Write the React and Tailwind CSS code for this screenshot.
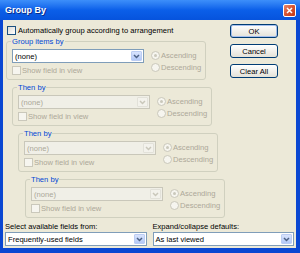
import React from "react";

const Chevron = ({ color }) => (
  <svg width="7" height="5" viewBox="0 0 7 5">
    <path d="M1 1l2.5 2.5L6 1" fill="none" stroke={color} strokeWidth="1.5" />
  </svg>
);

const Combo = ({ text, disabled, className = "" }) => (
  <div
    className={`flex h-[14px] border ${
      disabled ? "border-[#c9c7ba] bg-[#f0efe7] text-[#aca899]" : "border-[#7f9db9] bg-white text-black"
    } ${className}`}
  >
    <span className="flex-1 pl-[2px] flex items-center whitespace-nowrap">{text}</span>
    <span
      className={`w-[11px] m-[1px] flex items-center justify-center rounded-[1px] border ${
        disabled
          ? "bg-[#f3f2ec] border-[#e2e1d9]"
          : "bg-linear-to-b from-[#d9e4fd] to-[#b4c9f7] border-[#bccdf3]"
      }`}
    >
      <Chevron color={disabled ? "#c9c7ba" : "#4d6185"} />
    </span>
  </div>
);

const Check = ({ disabled }) => (
  <span
    className={`w-[9px] h-[9px] shrink-0 border ${
      disabled ? "border-[#cac8bb] bg-[#f6f5ef]" : "border-[#1c5180] bg-linear-to-br from-[#dcdbd5] to-white"
    }`}
  />
);

const Radio = ({ checked, label }) => (
  <div className="flex items-center gap-[1px] h-[9px] text-[#aca899]">
    <span className="w-[9px] h-[9px] rounded-full border border-[#cac8bb] bg-[#f6f5ef] flex items-center justify-center">
      {checked && <span className="w-[3px] h-[3px] rounded-full bg-[#cac8bb]" />}
    </span>
    <span>{label}</span>
  </div>
);

const GroupBox = ({ title, enabled, className = "" }) => (
  <fieldset className={`w-[200px] min-w-0 border border-[#d0d0bf] rounded-[3px] pt-[3px] pb-[4px] ${className}`}>
    <legend className="ml-[4px] px-[1px] text-[#0046d5]">{title}</legend>
    <div className="flex pl-[5px]">
      <div className="flex flex-col">
        <Combo text="(none)" disabled={!enabled} className="w-[132px]" />
        <div className="mt-[3px] flex items-center gap-[1px] h-[9px] text-[#aca899]">
          <Check disabled />
          <span>Show field in view</span>
        </div>
      </div>
      <div className="ml-[7px] pt-[2px] flex flex-col gap-[3px]">
        <Radio checked label="Ascending" />
        <Radio label="Descending" />
      </div>
    </div>
  </fieldset>
);

const Button = ({ label, isDefault }) => (
  <div
    className={`w-[48px] h-[14px] rounded-[3px] border border-[#003c74] bg-linear-to-b from-white to-[#e4e2d8] flex items-center justify-center ${
      isDefault ? "shadow-[inset_0_0_0_1px_#a6c0ef]" : ""
    }`}
  >
    {label}
  </div>
);

const App = () => {
  return (
    <div className="w-[300px] h-[253px] bg-[#0a47d2] flex flex-col overflow-hidden font-['Liberation_Sans',Arial,sans-serif] text-[7.6px] leading-[9px] text-black">
      <div className="h-[20px] shrink-0 flex items-center pl-[5px] pr-[4px] bg-linear-to-b from-[#3d8ffa] via-[#0b5fe9] to-[#0653dd]">
        <span className="flex-1 text-white font-bold text-[9px] [text-shadow:1px_1px_0_#0a2c8a]">Group By</span>
        <span className="w-[13px] h-[13px] rounded-[2px] border border-white bg-linear-to-br from-[#e8876a] via-[#d65330] to-[#c23a17] flex items-center justify-center">
          <svg width="7" height="7" viewBox="0 0 7 7">
            <path d="M1 1l5 5M6 1L1 6" stroke="white" strokeWidth="1.5" />
          </svg>
        </span>
      </div>

      <div className="flex-1 ml-[3px] mr-[4px] mb-[5px] bg-[#ece9d8] flex flex-col">
        <div className="flex">
          <div className="w-[222px] pl-[3px] pt-[6px] flex flex-col">
            <div className="ml-[1px] flex items-center gap-[2px] h-[9px] whitespace-nowrap">
              <Check />
              <span>Automatically group according to arrangement</span>
            </div>
            <GroupBox title="Group items by" enabled className="mt-[2px]" />
            <GroupBox title="Then by" className="mt-[3px] ml-[6px]" />
            <GroupBox title="Then by" className="mt-[3px] ml-[12px]" />
            <GroupBox title="Then by" className="mt-[3px] ml-[19px]" />
          </div>
          <div className="ml-[5px] pt-[4px] flex flex-col gap-[6px]">
            <Button label="OK" isDefault />
            <Button label="Cancel" />
            <Button label="Clear All" />
          </div>
        </div>

        <div className="mt-auto pb-[2px] px-[2px] flex gap-[6px]">
          <div className="flex-1 flex flex-col gap-[1px]">
            <span>Select available fields from:</span>
            <Combo text="Frequently-used fields" />
          </div>
          <div className="flex-1 flex flex-col gap-[1px]">
            <span>Expand/collapse defaults:</span>
            <Combo text="As last viewed" />
          </div>
        </div>
      </div>
    </div>
  );
};

export default App;
